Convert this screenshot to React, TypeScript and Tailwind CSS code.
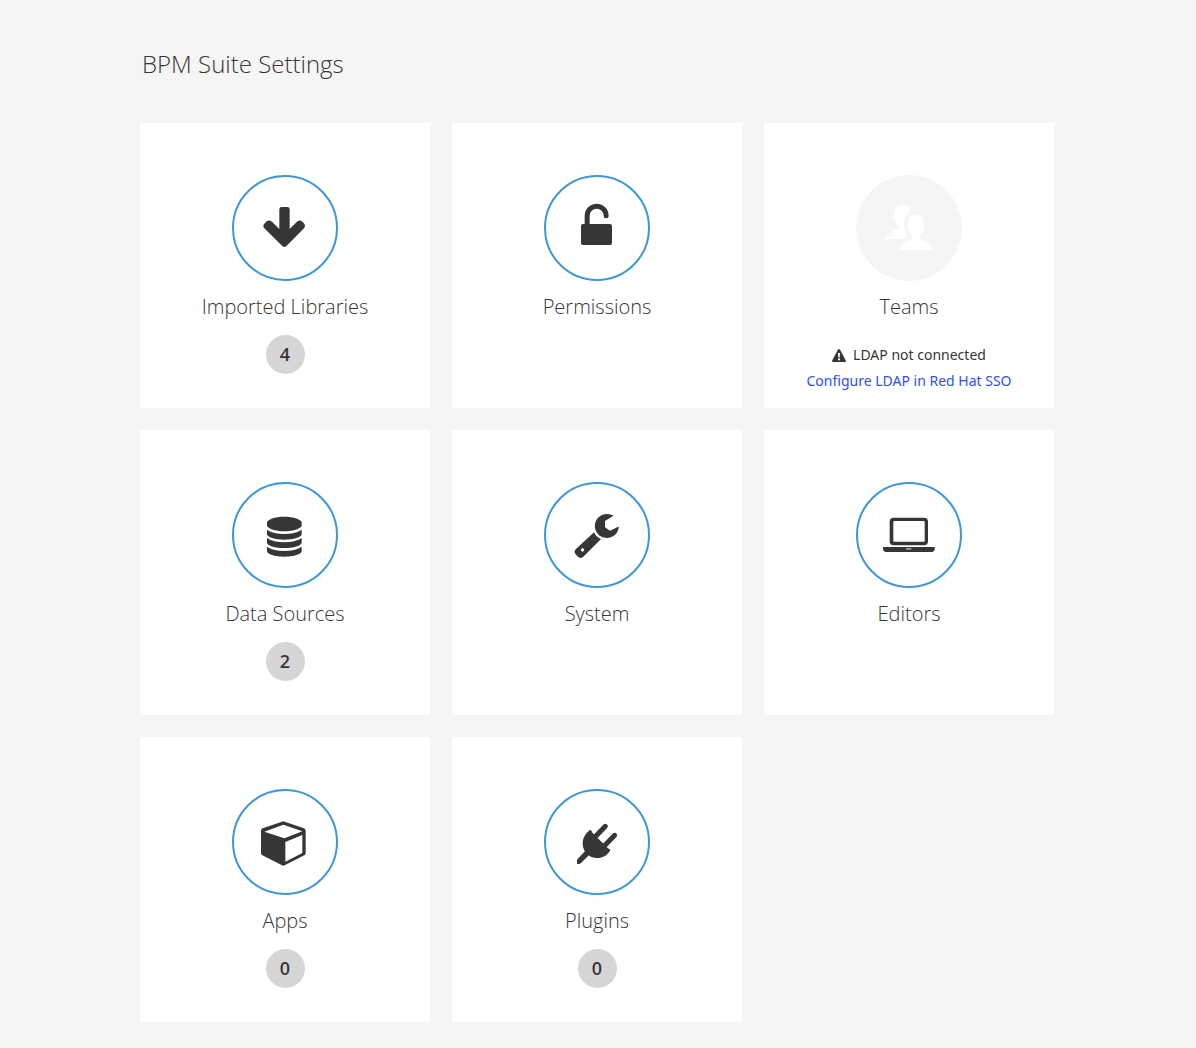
import React from "react";

type Setting = {
  name: string;
  icon: React.ReactNode;
  count?: number;
  disabled?: boolean;
};

const icons = {
  arrow: (
    <path d="M170 111h17q7 0 7 7v59l22-22q9-7 16 0l6 6q5 7-1 14l-52 52q-7 7-14 0l-53-52q-6-7 0-14l7-7q8-6 16 1l22 22v-59q0-7 7-7z" />
  ),
  unlock: (
    <>
      <rect x="132" y="162" width="93" height="63" rx="6" />
      <path
        d="M150.500 164V137a28.500 28.500 0 0 1 57 0"
        fill="none"
        stroke="currentColor"
        strokeWidth="15"
        strokeLinecap="round"
      />
    </>
  ),
  users: (
    <>
      <path d="M161 104c12 0 20 4 22 14c1 4 1 8 0 11c-10 5-15 14-15 27c-4 8-4 17 1 25c6 8 7 11 5 18l-14 8H108c7-13 24-25 42-32c1-6-4-10-8-17c-3-5-8-10-8-20c0-3 1-7 3-9c0-15 7-25 24-25z" />
      <path d="M201 135c12 0 20 4 23 14c1 4 0 10 0 17c3 2 2 9-1 15c-2 3-3 5-4 8c-3 6-8 9-8 17c14 5 33 16 42 33H149c9-16 26-26 42-33c0-8-5-11-8-17c-1-3-2-5-4-8c-4-5-5-13-2-15c0-7-1-13 0-17c4-10 12-14 24-14z" />
    </>
  ),
  database: (
    <>
      <path d="M126 137c0-10 24-18 52-18s52 8 52 18v8c0 10-24 18-52 18s-52-8-52-18z" />
      <path d="M126 158q20 13 52 13t52-13v14c0 9-24 16-52 16s-52-7-52-16z" />
      <path d="M126 183q20 13 52 13t52-13v14c0 9-24 16-52 16s-52-7-52-16z" />
      <path d="M126 209q20 13 52 13t52-13v14c0 9-24 16-52 16s-52-7-52-16z" />
    </>
  ),
  wrench: (
    <>
      <path d="M228 117L204 132V151L219 161L242 150Q246 148 245 153A36 36 0 1 1 224 114Q231 114 228 117Z" />
      <path
        fillRule="evenodd"
        d="M171 166Q177 180 192 186L139 239Q131 246 123 239L116 232Q109 225 116 217ZM136 214a5 5 0 1 0 1 0z"
      />
    </>
  ),
  laptop: (
    <>
      <path
        fillRule="evenodd"
        d="M134 122h91q12 0 12 12v59q0 12-12 12h-91q-12 0-12-12v-59q0-12 12-12zM136 132q-3 0-3 3v56q0 3 3 3h88q3 0 3-3v-56q0-3-3-3z"
      />
      <path d="M102 210h155v5q0 10-13 10H115q-13 0-13-10z" />
      <rect x="171" y="213" width="16" height="5" fill="#a3a3a3" />
    </>
  ),
  cube: (
    <path
      fillRule="evenodd"
      d="M171 113q4-2 8 0l58 20q5 2 5 7v67q0 5-4 7l-59 30q-4 2-8 0l-59-30q-4-2-4-7v-67q0-5 5-7zM175 122L118 143L178 163L232 142zM181 174V233L232 207V153z"
    />
  ),
  plug: (
    <>
      <path
        d="M176 157L205 127M204 184L233 154"
        fill="none"
        stroke="currentColor"
        strokeWidth="15"
        strokeLinecap="round"
      />
      <path d="M161 137L167 147L211 191L220 197C213 213 198 222 180 222C157 222 137 203 137 179C137 160 147 145 161 137Z" />
      <path d="M145 200L157 212L133 236Q129 240 125 240H120V227Z" />
    </>
  ),
};

const settings: Setting[] = [
  { name: "Imported Libraries", icon: icons.arrow, count: 4 },
  { name: "Permissions", icon: icons.unlock },
  { name: "Teams", icon: icons.users, disabled: true },
  { name: "Data Sources", icon: icons.database, count: 2 },
  { name: "System", icon: icons.wrench },
  { name: "Editors", icon: icons.laptop },
  { name: "Apps", icon: icons.cube, count: 0 },
  { name: "Plugins", icon: icons.plug, count: 0 },
];

function SettingCard({ name, icon, count, disabled }: Setting) {
  return (
    <li className="flex min-h-[285px] flex-col items-center bg-white pt-[52px]">
      <button type="button" disabled={disabled} className="flex flex-col items-center gap-3">
        <span
          className={
            disabled
              ? "flex size-[106px] items-center justify-center rounded-full bg-[#f5f5f5] text-white"
              : "flex size-[106px] items-center justify-center rounded-full border-2 border-[#3e96dc] text-[#363636]"
          }
        >
          <svg viewBox="90 84 180 180" className="size-[60px]" fill="currentColor" aria-hidden="true">
            {icon}
          </svg>
        </span>
        <span className="text-[20px] leading-7 font-light">{name}</span>
      </button>
      {count !== undefined && (
        <span className="mt-3.5 flex size-[39px] items-center justify-center rounded-full bg-[#d6d6d6] pb-0.5 text-[18px] leading-6 font-semibold">
          {count}
        </span>
      )}
      {disabled && (
        <div className="mt-[21px] flex flex-col items-center font-['Noto_Sans',sans-serif] text-[14px] leading-[26px]">
          <p className="flex items-center gap-[7px]">
            <svg viewBox="0 0 14 13" className="h-[13px] w-[14px]" fill="currentColor" aria-hidden="true">
              <path
                fillRule="evenodd"
                d="M6 .6q1-1.200 2 0l5.800 11q.5 1.400-1 1.400H1.200q-1.500 0-1-1.400zM6 4l.3 4.500h1.400L8 4zM6 9.500v1.800h2V9.500z"
              />
            </svg>
            LDAP not connected
          </p>
          <a href="#ldap" className="text-[#2f50f5]">
            Configure LDAP in Red Hat SSO
          </a>
        </div>
      )}
    </li>
  );
}

export default function App() {
  return (
    <div className="min-h-screen bg-[#f5f5f5] pt-[46px] pr-0.5 pb-[26px] font-['Open_Sans',sans-serif] text-[#363636]">
      <main className="mx-auto max-w-[914px]">
        <h1 className="mb-[41px] pl-0.5 text-[24px] leading-9 font-light">BPM Suite Settings</h1>
        <ul className="grid grid-cols-1 gap-[22px] sm:grid-cols-2 lg:grid-cols-3">
          {settings.map((setting) => (
            <SettingCard key={setting.name} {...setting} />
          ))}
        </ul>
      </main>
    </div>
  );
}
